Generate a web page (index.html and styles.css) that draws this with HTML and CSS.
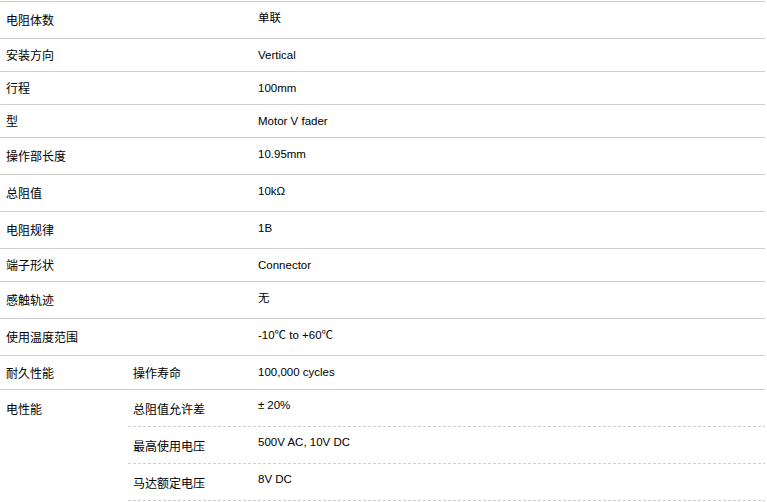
FILE: index.html
```html
<!DOCTYPE html>
<html lang="zh-CN">
<head>
<meta charset="utf-8">
<title>规格</title>
<link rel="stylesheet" href="styles.css">
</head>
<body>
<div class="spec">
  <div class="row tall"><div class="label wide">电阻体数</div><div class="value">单联</div></div>
  <div class="row"><div class="label wide">安装方向</div><div class="value">Vertical</div></div>
  <div class="row"><div class="label wide">行程</div><div class="value">100mm</div></div>
  <div class="row"><div class="label wide">型</div><div class="value">Motor V fader</div></div>
  <div class="row tall"><div class="label wide">操作部长度</div><div class="value">10.95mm</div></div>
  <div class="row tall"><div class="label wide">总阻值</div><div class="value">10kΩ</div></div>
  <div class="row tall"><div class="label wide">电阻规律</div><div class="value">1B</div></div>
  <div class="row"><div class="label wide">端子形状</div><div class="value">Connector</div></div>
  <div class="row tall"><div class="label wide">感触轨迹</div><div class="value">无</div></div>
  <div class="row tall"><div class="label wide">使用温度范围</div><div class="value">-10℃ to +60℃</div></div>
  <div class="row mid"><div class="label">耐久性能</div><div class="label sub">操作寿命</div><div class="value">100,000 cycles</div></div>
  <div class="group">
    <div class="glabel">电性能</div>
    <div class="label sub dash">总阻值允许差</div><div class="value dash"><span class="pm">±</span>20%</div>
    <div class="label sub dash">最高使用电压</div><div class="value dash">500V AC, 10V DC</div>
    <div class="label sub dash">马达额定电压</div><div class="value dash">8V DC</div>
  </div>
</div>
</body>
</html>
```
FILE: styles.css
```css
* { box-sizing: border-box; }
html, body { margin: 0; padding: 0; background: #fff; }
body {
  color: #000;
  font-family: "Noto Sans CJK SC", "Liberation Sans", sans-serif;
  font-size: 12px;
  line-height: 16px;
}
.spec {
  width: 765px;
  margin-top: 1px;
  border-top: 1px solid #cdcdcd;
}
.row {
  display: grid;
  grid-template-columns: 128px 125px 1fr;
  height: 33px;
  border-bottom: 1px solid #cdcdcd;
}
.row.tall { height: 37px; }
.row.mid { height: 34px; }
.label {
  align-self: center;
  padding-left: 6px;
  white-space: nowrap;
}
.label.wide { grid-column: 1 / 3; }
.label.sub { padding-left: 5px; }
.value {
  align-self: start;
  padding-top: 8px;
  padding-left: 5px;
  font-family: "Liberation Sans", "Noto Sans CJK SC", sans-serif;
  font-size: 11.5px;
  white-space: nowrap;
}
.pm { margin-right: 3px; }
.group {
  display: grid;
  grid-template-columns: 128px 125px 1fr;
  grid-template-rows: 37px 37px 37px;
}
.glabel {
  grid-column: 1;
  grid-row: 1 / 4;
  padding-top: 11px;
  padding-left: 6px;
}
.dash {
  align-self: stretch;
  background-image: linear-gradient(to right, #cfcfcf 3px, transparent 3px);
  background-size: 5px 1px;
  background-repeat: repeat-x;
  background-position: left bottom;
}
.label.dash { display: flex; align-items: center; }
.value.dash { padding-top: 7px; }
```
